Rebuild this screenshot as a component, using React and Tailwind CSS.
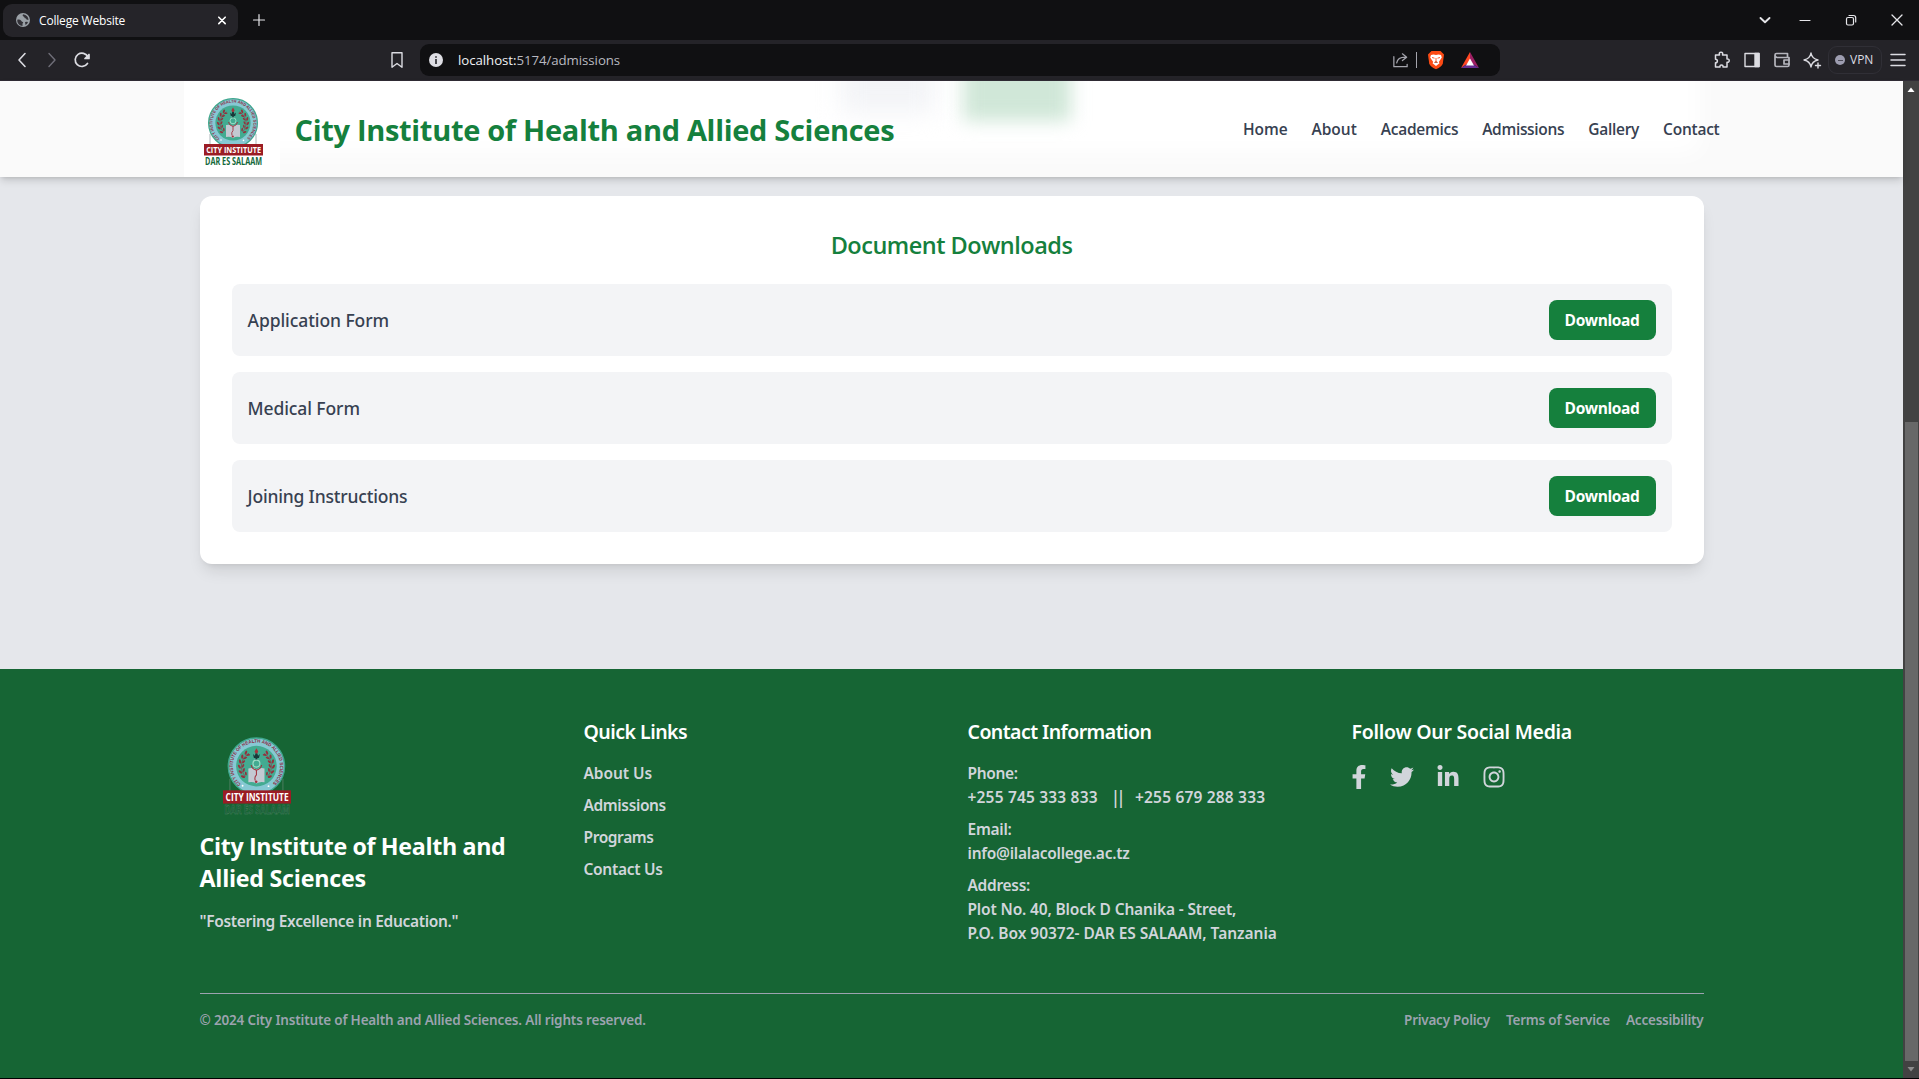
import React from "react";
import { FaFacebookF, FaTwitter, FaLinkedinIn, FaInstagram } from "react-icons/fa";

const NAV = [
  ["Home", "tracking-[-0.1px]"],
  ["About", "tracking-[0px]"],
  ["Academics", "tracking-[-0.28px]"],
  ["Admissions", "tracking-[-0.32px]"],
  ["Gallery", "tracking-[-0.28px]"],
  ["Contact", "tracking-[-0.24px]"],
];

const DOCS = [
  ["Application Form", "tracking-[-0.08px]"],
  ["Medical Form", "tracking-[-0.09px]"],
  ["Joining Instructions", "tracking-[-0.18px]"],
];

const LINKS = [
  ["About Us", "tracking-[-0.05px]"],
  ["Admissions", "tracking-[-0.38px]"],
  ["Programs", "tracking-[-0.4px]"],
  ["Contact Us", "tracking-[-0.29px]"],
];

const LEGAL = [
  ["Privacy Policy", "tracking-[-0.25px]"],
  ["Terms of Service", "tracking-[-0.22px]"],
  ["Accessibility", "tracking-[-0.23px]"],
];

const LEAF_ANGLES = [128, 146, 164, 182, 200, 218];

function Logo({ className, id, onDark }) {
  return (
    <svg className={className} viewBox="0 0 59 68" fill="none" overflow="visible">
      <path d="M6 36v12M52 36v12" stroke={onDark ? "#4f7f63" : "#9aa5a8"} strokeWidth="0.8" />
      <circle cx="29" cy="25" r="24.4" fill="#86c8d3" stroke="#3fa78e" strokeWidth="1.2" />
      <circle cx="29" cy="25" r="17.6" fill="#43ab91" />
      <path id={id} d="M15.6 40.6A20.5 20.5 0 1 1 42.400 40.6" />
      <text fontSize="4.2" fontWeight="700" fill="#8d2c44" fontFamily="Liberation Sans, sans-serif">
        <textPath href={"#" + id} textLength="98" lengthAdjust="spacingAndGlyphs">
          CITY INSTITUTE OF HEALTH AND ALLIED SCIENCES
        </textPath>
      </text>
      {[1, -1].map((s) => (
        <g key={s} transform={s === 1 ? undefined : "translate(58 0) scale(-1 1)"}>
          <path d="M22.500 13.800A13 13 0 0 0 19.500 34" stroke="#8a3a44" strokeWidth="0.6" />
          {LEAF_ANGLES.map((a) => {
            const r = (a * Math.PI) / 180;
            return (
              <g key={a} fill="#94313d">
                <ellipse cx={29 + 14.8 * Math.cos(r)} cy={25 - 14.8 * Math.sin(r)} rx="1.9" ry="0.95" transform={`rotate(${60 - a} ${29 + 14.8 * Math.cos(r)} ${25 - 14.8 * Math.sin(r)})`} />
                <ellipse cx={29 + 11.6 * Math.cos(r)} cy={24.4 - 11.6 * Math.sin(r)} rx="1.7" ry="0.8" transform={`rotate(${120 - a} ${29 + 11.6 * Math.cos(r)} ${24.4 - 11.6 * Math.sin(r)})`} />
              </g>
            );
          })}
        </g>
      ))}
      <path d="M29 9.500l1.600 2.800-1 2h-1.200l-1-2z" fill="#a8323c" />
      <path d="M26 14.500l1.600 1.500.6-2h1.600l.6 2 1.600-1.500-.8 3.500h-1.400V20h-1.600v-2h-1.400z" fill="#173a3a" />
      <circle cx="29" cy="22.800" r="3" stroke="#9edcc6" strokeWidth="1" />
      <path d="M22 27q4-1 7 1 3-2 7-1v12q-4-1-7 1-3-2-7-1z" fill="#c3c9d2" />
      <path d="M24.500 24q.5 3.500 4.500 4.500 4-1 4.500-4.500M29 28.500v4q-2 2-1 5" stroke="#a3303c" strokeWidth="0.9" />
      <circle cx="28.800" cy="38.500" r="1.100" fill="#a3303c" />
      <circle cx="17" cy="42" r="0.8" fill="#fff" />
      <circle cx="39.500" cy="42.400" r="0.8" fill="#fff" />
      <rect x="0" y="46" width="59" height="11.500" fill="#9b1c24" />
      <text x="2.200" y="55.100" fontSize="9.300" fontWeight="700" fill="#fff" textLength="54.800" lengthAdjust="spacingAndGlyphs" fontFamily="Open Sans, sans-serif">
        CITY INSTITUTE
      </text>
      <text
        x="1"
        y="66.800"
        fontSize="10.600"
        fontWeight="700"
        fill={onDark ? "#175c36" : "#14683a"}
        stroke={onDark ? "#528866" : "none"}
        strokeWidth={onDark ? 0.35 : 0}
        textLength="57"
        lengthAdjust="spacingAndGlyphs"
        fontFamily="Open Sans, sans-serif"
      >
        DAR ES SALAAM
      </text>
    </svg>
  );
}

function Icon({ size = 20, className = "", children, w = 1.5 }) {
  return (
    <svg width={size} height={size} viewBox="0 0 20 20" fill="none" stroke="currentColor" strokeWidth={w} strokeLinecap="round" strokeLinejoin="round" className={"shrink-0 " + className}>
      {children}
    </svg>
  );
}

function TabStrip() {
  return (
    <div className="flex h-10 items-center bg-[#101012] text-[#e6e6ea]">
      <div className="ml-[3px] flex h-[33px] w-[235px] items-center rounded-[9px] bg-[#252429] pl-3 pr-[6px] text-white">
        <svg width="16" height="16" viewBox="0 0 16 16" className="shrink-0">
          <circle cx="8" cy="8" r="7" fill="#9aa0a6" />
          <path d="M2.500 7.500Q5 7 6 8.500T8 10q.5 1-.5 1.500V14Q3 13.500 2.200 9zM8 2.300Q7 4 8.500 4.500T9.500 6q2 0 2 1.500l2 .5Q13.500 3.500 8 2.300zM10 10q2-.5 3 0-.5 2-2.500 3z" fill="#333238" />
        </svg>
        <span className="ml-2 flex-1 pt-px text-[12px] tracking-[-0.18px]">College Website</span>
        <Icon size={20} w={1.6}><path d="M6.800 7.200l6.400 6.400M13.200 7.200l-6.400 6.400" /></Icon>
      </div>
      <Icon size={20} className="ml-[11px]" w={1.2}><path d="M10 4.500v11M4.500 10h11" /></Icon>
      <div className="ml-auto flex items-center pr-3">
        <Icon className="mr-5" w={1.9}><path d="M5.500 8l4.500 4.200L14.500 8" /></Icon>
        <Icon className="mr-[26px]" w={1.2}><path d="M5 10.500h10" /></Icon>
        <Icon className="mr-[26px]" w={1.2}>
          <rect x="5.500" y="7.500" width="7" height="7.500" rx="1.500" />
          <path d="M8 5.500h4.500q2.200 0 2.200 2.200V12" />
        </Icon>
        <Icon w={1.3}><path d="M5 5l10 10M15 5L5 15" /></Icon>
      </div>
    </div>
  );
}

function Toolbar() {
  return (
    <div className="flex h-[41px] items-center border-b border-[#2f2b34] bg-[#242328] text-[#dcdce2]">
      <Icon className="ml-3" w={1.6}><path d="M13 3.500L7 10l6 6.500" /></Icon>
      <Icon className="ml-[10px] text-[#6f6e78]" w={1.4}><path d="M7 3.500l6 6.500-6 6.500" /></Icon>
      <Icon className="ml-[10px]" w={1.7}>
        <path d="M15.500 13.500A6.700 6.700 0 1 1 16 7" />
        <path d="M17 4.500v4h-4z" fill="currentColor" />
      </Icon>
      <Icon className="ml-[295px]" w={1.4}><path d="M5 2.800h10v14.400L10 13.500 5 17.200z" /></Icon>
      <div className="ml-[13px] flex h-8 w-[1080px] items-center rounded-[9px] bg-[#101012] pl-[9px]">
        <svg width="14" height="14" viewBox="0 0 14 14">
          <circle cx="7" cy="7" r="7" fill="#dedee4" />
          <path d="M6.200 3.200h1.600v1.600H6.200zM6.200 6h1.600v5H6.200z" fill="#242328" />
        </svg>
        <span className="ml-[15px] pt-px text-[13.25px] tracking-[-0.06px] text-[#b9b9c0]">
          <span className="text-[#f0f0f4]">localhost:</span>5174/admissions
        </span>
        <div className="ml-auto flex items-center pr-5">
          <Icon size={19} className="text-[#a5a5ad]" w={1.3}>
            <path d="M3 6v10.500h14V14" />
            <path d="M6 12.500Q7 6.500 15 6.500M12 3l4.500 3.500L12 10" />
          </Icon>
          <div className="ml-[6px] h-4 w-px bg-[#a5a5ad]" />
          <svg width="18" height="20" viewBox="0 0 18 20" className="ml-[10px]">
            <path d="M4.500 1h9L17 4.500l-1.200 9Q15 16.500 9 19.300 3 16.500 2.200 13.500L1 4.500z" fill="#fb4a14" />
            <path d="M4 5l2.500-.5L9 5l2.500-.5L14 5l.8 2.500-3 4.500.7 1.300L9 16l-3.500-2.700.7-1.300-3-4.500z" fill="#fff" />
            <path d="M5 7.500l2.500.7M13 7.500l-2.500.7M9 8v3.500M7.300 12.500L9 11.500l1.700 1" stroke="#fb4a14" strokeWidth="0.9" />
          </svg>
          <svg width="18" height="18" viewBox="0 0 18 18" className="ml-4">
            <path d="M9 1L0 17l9-6z" fill="#ff4724" />
            <path d="M9 1l9 16-9-6z" fill="#9e1f63" />
            <path d="M0 17h18l-9-6z" fill="#662d91" />
            <path d="M9 7.500l-4 7h8z" fill="#fff" />
          </svg>
          <div className="w-[1px]" />
        </div>
      </div>
      <div className="ml-auto flex items-center pr-[11px]">
        <Icon className="mr-[10px]" w={1.5}>
          <path d="M3.500 5h4q-.8-2.800 1.500-2.800T10.500 5H15v4q2.200-.3 2.200 1.600T15 12.300V17h-4q.3-2-1.500-2T8 17H3.500v-4.200q1.900 0 1.900-1.800T3.500 9.200z" />
        </Icon>
        <Icon className="mr-[10px]" w={1.4}>
          <rect x="3" y="3.500" width="14" height="13" />
          <path d="M13 3.500h4v13h-4z" fill="currentColor" />
        </Icon>
        <Icon className="mr-[10px] text-[#b5b5bd]" w={1.7}>
          <path d="M3 5v10q0 1.500 1.500 1.500h11q1.500 0 1.500-1.500V7.500H5Q3 7 3 5q0-1.500 1.500-1.500H15.500v4" />
          <path d="M17 10h-5v4h5" />
        </Icon>
        <Icon className="mr-[6px]" w={1.4}>
          <path d="M9 3q1 5.800 7 7-6 1.200-7 7-1-5.800-7-7 6-1.200 7-7zM16 13v5M13.500 15.500h5" />
        </Icon>
        <div className="mr-[6px] flex h-7 w-[54px] items-center gap-[5px] rounded-[9px] border border-[#302f36] pl-[6px]">
          <div className="flex h-[10px] w-[10px] items-center justify-center rounded-full bg-[#9d9db0]">
            <div className="h-px w-[5px] bg-[#4a4956]" />
          </div>
          <span className="text-[12px] leading-4">VPN</span>
        </div>
        <Icon w={1.5}><path d="M3 4.500h14M3 10h14M3 15.500h14" /></Icon>
      </div>
    </div>
  );
}

function Header() {
  return (
    <header className="relative z-10 h-24 shrink-0 bg-[#fafafa] shadow-[0_4px_8px_-1px_rgba(0,0,0,0.16),0_2px_4px_-2px_rgba(0,0,0,0.12)]">
      <div className="absolute inset-0 overflow-hidden">
        <div className="absolute -top-16 bottom-6 left-[200px] right-[203px] bg-white blur-[12px]" />
        <div className="absolute -top-10 left-[841px] h-[72px] w-[94px] bg-[#f3f4f7] blur-[12px]" />
        <div className="absolute -top-10 left-[963px] h-[80px] w-[108px] bg-[#d0e7d8] blur-[9px]" />
      </div>
      <div className="relative mx-auto flex h-full w-[1536px] items-center justify-between">
        <div className="flex items-center">
          <div className="flex h-24 w-24 bg-white pl-[20px] pt-[17px]">
            <Logo id="seal-top" className="h-[68px] w-[59px]" />
          </div>
          <h1 className="ml-[15px] pt-[2px] text-[29px] font-bold leading-9 tracking-[-0.31px] text-[#15803d]">
            City Institute of Health and Allied Sciences
          </h1>
        </div>
        <nav className="flex gap-6 text-[15.5px] font-semibold leading-6 text-[#374151]">
          {NAV.map(([t, c]) => (
            <a key={t} className={c}>{t}</a>
          ))}
        </nav>
      </div>
    </header>
  );
}

function Downloads() {
  return (
    <main className="flex-1 pt-[19px]">
      <section className="mx-auto w-[1504px] rounded-xl bg-white p-8 shadow-lg">
        <h2 className="mb-[23px] pt-px text-center text-[23.5px] font-semibold leading-8 tracking-[-0.5px] text-[#15803d]">Document Downloads</h2>
        <ul className="flex flex-col gap-4">
          {DOCS.map(([t, c]) => (
            <li key={t} className="flex h-[72px] items-center justify-between rounded-lg bg-[#f3f4f6] p-4">
              <span className={"font-['Noto_Sans',sans-serif] text-[17.5px] font-medium leading-7 text-[#374151] " + c}>{t}</span>
              <button className="h-10 w-[107px] rounded-lg bg-[#15803d] pt-[2px] text-[15.5px] font-bold tracking-[-0.4px] text-white">Download</button>
            </li>
          ))}
        </ul>
      </section>
    </main>
  );
}

function FooterHeading({ children, className }) {
  return <h3 className={"mb-[15px] pt-px text-[19.5px] leading-7 text-white " + className}>{children}</h3>;
}

function Footer() {
  return (
    <footer className="h-[409px] shrink-0 bg-[#166534] pt-12 font-['Noto_Sans',sans-serif] text-[15.5px] font-semibold leading-6 text-[#d1d5db]">
      <div className="mx-auto w-[1504px]">
        <div className="grid h-[228px] grid-cols-4 gap-8">
          <div>
            <div className="h-[113px] pl-[23.5px] pt-[20px]">
              <Logo id="seal-bottom" onDark className="h-[79px] w-[68px]" />
            </div>
            <h2 className="font-['Open_Sans',sans-serif] text-[23.25px] font-bold leading-8 text-white">
              <span className="block tracking-[-0.35px]">City Institute of Health and</span>
              <span className="block tracking-[-0.25px]">Allied Sciences</span>
            </h2>
            <p className="mt-[15px] tracking-[-0.31px]">"Fostering Excellence in Education."</p>
          </div>
          <div>
            <FooterHeading className="tracking-[-0.52px]">Quick Links</FooterHeading>
            <ul className="flex flex-col gap-2">
              {LINKS.map(([t, c]) => (
                <li key={t} className={c}>{t}</li>
              ))}
            </ul>
          </div>
          <div>
            <FooterHeading className="tracking-[-0.56px]">Contact Information</FooterHeading>
            <div className="flex flex-col gap-2 whitespace-nowrap">
              <div>
                <p className="tracking-[-0.32px]">Phone:</p>
                <p className="flex tracking-[0.18px]">
                  <span className="w-[143px]">+255 745 333 833</span>
                  <span className="w-[24.5px] text-[18px] font-medium tracking-[-4.500px]">||</span>
                  <span>+255 679 288 333</span>
                </p>
              </div>
              <div>
                <p className="tracking-[-0.25px]">Email:</p>
                <p className="tracking-[-0.26px]">info@ilalacollege.ac.tz</p>
              </div>
              <div>
                <p className="tracking-[-0.3px]">Address:</p>
                <p className="tracking-[-0.16px]">Plot No. 40, Block D Chanika - Street,</p>
                <p className="tracking-[-0.03px]">P.O. Box 90372- DAR ES SALAAM, Tanzania</p>
              </div>
            </div>
          </div>
          <div>
            <FooterHeading className="tracking-[-0.26px]">Follow Our Social Media</FooterHeading>
            <div className="flex gap-[22px] pt-[4px] text-[#d1d5db]">
              <FaFacebookF size={24} className="-ml-[5px] -mr-1" />
              <FaTwitter size={24} className="ml-[1px]" />
              <FaLinkedinIn size={24} />
              <FaInstagram size={24} />
            </div>
          </div>
        </div>
        <div className="mt-12 flex justify-between border-t border-[#9ca3af] pt-4 text-[13.5px] leading-5 text-[#9ca3af]">
          <p className="tracking-[-0.17px]">© 2024 City Institute of Health and Allied Sciences. All rights reserved.</p>
          <div className="flex gap-4">
            {LEGAL.map(([t, c]) => (
              <a key={t} className={c}>{t}</a>
            ))}
          </div>
        </div>
      </div>
    </footer>
  );
}

function Scrollbar() {
  return (
    <div className="flex w-4 shrink-0 flex-col items-center bg-[#424242]">
      <svg width="16" height="18" viewBox="0 0 16 18"><path d="M8 6.500l3.500 4.500h-7z" fill="#fff" /></svg>
      <div className="mt-[323px] h-[639px] w-[13px] bg-[#686868]" />
      <svg width="16" height="17" viewBox="0 0 16 17"><path d="M4.500 6h7L8 10.500z" fill="#8c8c8c" /></svg>
    </div>
  );
}

export default function App() {
  return (
    <div className="flex h-[1079px] w-[1919px] flex-col overflow-hidden bg-black font-['Open_Sans','Noto_Sans',sans-serif]">
      <TabStrip />
      <Toolbar />
      <div className="flex h-[997px]">
        <div className="flex w-[1903px] flex-col bg-[#e5e7eb]">
          <Header />
          <Downloads />
          <Footer />
        </div>
        <Scrollbar />
      </div>
    </div>
  );
}
